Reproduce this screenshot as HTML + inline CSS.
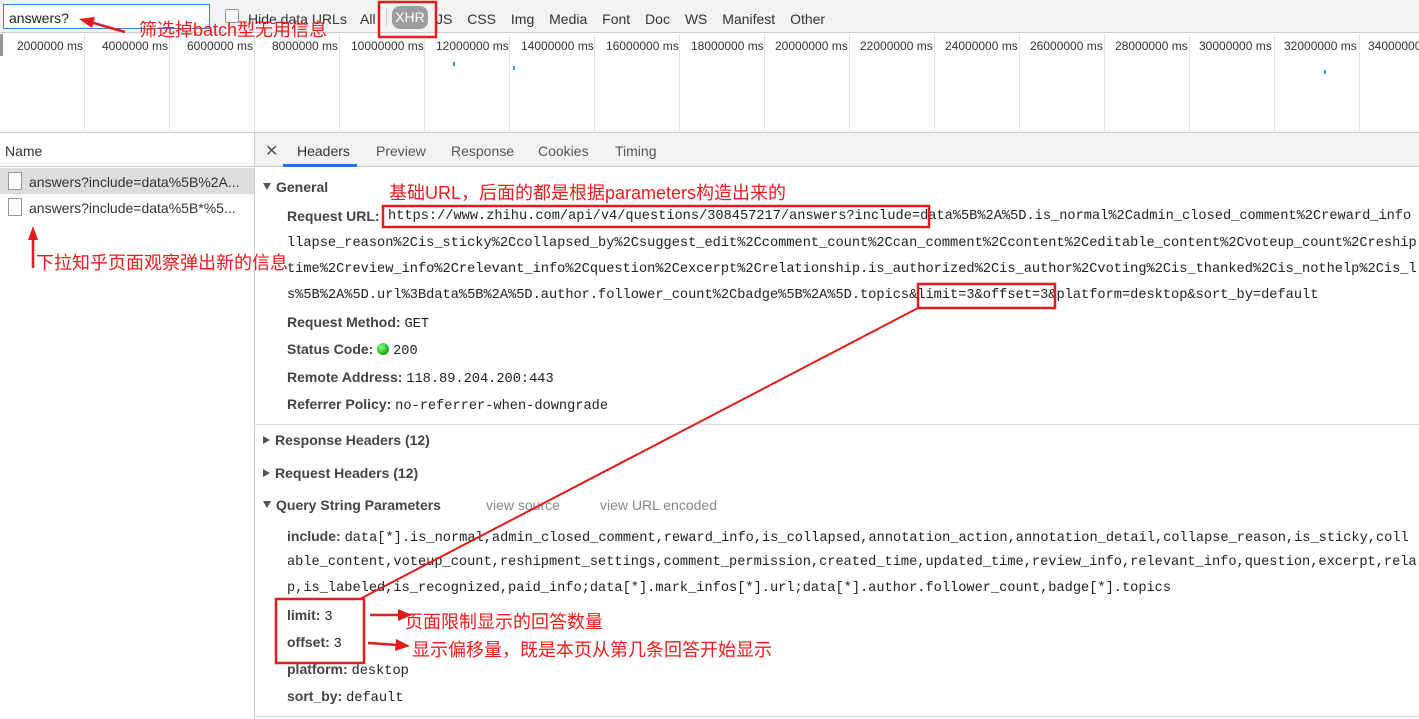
<!DOCTYPE html>
<html><head><meta charset="utf-8"><style>
*{margin:0;padding:0;box-sizing:border-box}
body{width:1419px;height:719px;overflow:hidden;background:#fff;font-family:"Liberation Sans","Noto Sans CJK SC",sans-serif;font-size:14px;color:#333;position:relative}
.a{position:absolute;white-space:nowrap}
.m{font-family:"Liberation Mono",monospace;font-size:13.65px;color:#222}
.b{font-weight:bold;color:#444;font-size:14px}
.red{color:#f21b1b;font-size:18px;font-family:"Liberation Sans","Noto Sans CJK SC",sans-serif}
.tri{display:inline-block;width:0;height:0;border-left:4px solid transparent;border-right:4px solid transparent;border-top:7px solid #555;margin-right:5px;vertical-align:2px}
.trr{display:inline-block;width:0;height:0;border-top:4px solid transparent;border-bottom:4px solid transparent;border-left:7px solid #555;margin-right:5px;vertical-align:1px}
</style></head><body>
<div class="a" style="left:0;top:0;width:1419px;height:33px;background:#f3f3f3;border-bottom:1px solid #ccc"></div>
<div class="a" style="left:3px;top:4px;width:207px;height:25px;background:#fff;border:1px solid #3b82d9"></div>
<div class="a" style="left:9px;top:10px;font-size:14px;color:#222">answers?</div>
<div class="a" style="left:225px;top:9px;width:14px;height:14px;border:1px solid #999;border-radius:2px;background:#fafafa"></div>
<div class="a" style="left:248px;top:11px;color:#333">Hide data URLs</div>
<div class="a" style="left:360px;top:11px;color:#333">All</div>
<div class="a" style="left:386px;top:8px;width:1px;height:18px;background:#ccc"></div>
<div class="a" style="left:392px;top:6px;width:36px;height:23px;background:#9e9e9e;border-radius:8px;color:#fff;text-align:center;line-height:23px">XHR</div>
<div class="a" style="left:436px;top:11px;color:#333;word-spacing:11px">JS CSS Img Media Font Doc WS Manifest Other</div>
<div class="a" style="left:0;top:33px;width:1419px;height:100px;border-bottom:1px solid #ccc"></div>
<div class="a" style="left:0;top:34px;width:3px;height:22px;background:#999"></div>
<div class="a" style="left:0;top:34px;width:1419px;height:99px;background:repeating-linear-gradient(90deg,transparent 0,transparent 84px,#e4e4e4 84px,#e4e4e4 85px)"></div>
<div class="a" style="left:0;top:39px;font-size:12px;color:#333">
<span class="a" style="left:17px">2000000 ms</span><span class="a" style="left:102px">4000000 ms</span><span class="a" style="left:187px">6000000 ms</span><span class="a" style="left:272px">8000000 ms</span><span class="a" style="left:351px">10000000 ms</span><span class="a" style="left:436px">12000000 ms</span><span class="a" style="left:521px">14000000 ms</span><span class="a" style="left:606px">16000000 ms</span><span class="a" style="left:691px">18000000 ms</span><span class="a" style="left:775px">20000000 ms</span><span class="a" style="left:860px">22000000 ms</span><span class="a" style="left:945px">24000000 ms</span><span class="a" style="left:1030px">26000000 ms</span><span class="a" style="left:1115px">28000000 ms</span><span class="a" style="left:1199px">30000000 ms</span><span class="a" style="left:1284px">32000000 ms</span><span class="a" style="left:1368px">34000000 ms</span></div>
<div class="a" style="left:453px;top:62px;width:2px;height:4px;background:#3aa"></div>
<div class="a" style="left:513px;top:66px;width:2px;height:4px;background:#3aa"></div>
<div class="a" style="left:1324px;top:70px;width:2px;height:4px;background:#3aa"></div>
<div class="a" style="left:254px;top:133px;width:1px;height:586px;background:#ccc"></div>
<div class="a" style="left:0;top:133px;width:254px;height:34px;border-bottom:1px solid #ccc"></div>
<div class="a" style="left:5px;top:143px;font-size:14px;color:#333">Name</div>
<div class="a" style="left:0;top:168px;width:254px;height:26px;background:#ddd"></div>
<div class="a" style="left:8px;top:172px;width:14px;height:18px;border:1px solid #999;background:#fff"></div>
<div class="a" style="left:29px;top:174px;color:#333">answers?include=data%5B%2A...</div>
<div class="a" style="left:8px;top:198px;width:14px;height:18px;border:1px solid #999;background:#fff"></div>
<div class="a" style="left:29px;top:200px;color:#333">answers?include=data%5B*%5...</div>
<div class="a" style="left:255px;top:133px;width:1164px;height:34px;background:#f3f3f3;border-bottom:1px solid #ccc"></div>
<div class="a" style="left:265px;top:141px;font-size:16px;color:#555">✕</div>
<div class="a" style="left:297px;top:143px;color:#333">Headers</div>
<div class="a" style="left:283px;top:164px;width:74px;height:3px;background:#1a73e8"></div>
<div class="a" style="left:376px;top:143px;color:#555">Preview</div>
<div class="a" style="left:451px;top:143px;color:#555">Response</div>
<div class="a" style="left:538px;top:143px;color:#555">Cookies</div>
<div class="a" style="left:615px;top:143px;color:#555">Timing</div>
<div class="a b" style="left:263px;top:179px"><span class="tri"></span>General</div>
<div class="a b" style="left:287px;top:208px">Request URL:</div>
<div class="a m" style="left:388px;top:209px">https://www.zhihu.com/api/v4/questions/308457217/answers?include=data%5B%2A%5D.is_normal%2Cadmin_closed_comment%2Creward_info</div>
<div class="a m" style="left:287px;top:236px">llapse_reason%2Cis_sticky%2Ccollapsed_by%2Csuggest_edit%2Ccomment_count%2Ccan_comment%2Ccontent%2Ceditable_content%2Cvoteup_count%2Creship</div>
<div class="a m" style="left:287px;top:262px">time%2Creview_info%2Crelevant_info%2Cquestion%2Cexcerpt%2Crelationship.is_authorized%2Cis_author%2Cvoting%2Cis_thanked%2Cis_nothelp%2Cis_l</div>
<div class="a m" style="left:287px;top:288px">s%5B%2A%5D.url%3Bdata%5B%2A%5D.author.follower_count%2Cbadge%5B%2A%5D.topics&amp;limit=3&amp;offset=3&amp;platform=desktop&amp;sort_by=default</div>
<div class="a b" style="left:287px;top:314px">Request Method: <span class="m" style="font-weight:normal">GET</span></div>
<div class="a b" style="left:287px;top:341px">Status Code: <span style="display:inline-block;width:12px;height:12px;border-radius:50%;background:radial-gradient(circle at 35% 35%,#8f8,#1a1 70%);vertical-align:-1px"></span> <span class="m" style="font-weight:normal">200</span></div>
<div class="a b" style="left:287px;top:369px">Remote Address: <span class="m" style="font-weight:normal">118.89.204.200:443</span></div>
<div class="a b" style="left:287px;top:396px">Referrer Policy: <span class="m" style="font-weight:normal">no-referrer-when-downgrade</span></div>
<div class="a" style="left:255px;top:424px;width:1164px;height:1px;background:#ddd"></div>
<div class="a b" style="left:263px;top:432px"><span class="trr"></span>Response Headers (12)</div>
<div class="a b" style="left:263px;top:465px"><span class="trr"></span>Request Headers (12)</div>
<div class="a b" style="left:263px;top:497px"><span class="tri"></span>Query String Parameters</div>
<div class="a" style="left:486px;top:497px;color:#888">view source</div>
<div class="a" style="left:600px;top:497px;color:#888">view URL encoded</div>
<div class="a b" style="left:287px;top:528px">include: <span class="m" style="font-weight:normal">data[*].is_normal,admin_closed_comment,reward_info,is_collapsed,annotation_action,annotation_detail,collapse_reason,is_sticky,coll</span></div>
<div class="a m" style="left:287px;top:555px">able_content,voteup_count,reshipment_settings,comment_permission,created_time,updated_time,review_info,relevant_info,question,excerpt,rela</div>
<div class="a m" style="left:287px;top:581px">p,is_labeled,is_recognized,paid_info;data[*].mark_infos[*].url;data[*].author.follower_count,badge[*].topics</div>
<div class="a b" style="left:287px;top:607px">limit: <span class="m" style="font-weight:normal">3</span></div>
<div class="a b" style="left:287px;top:634px">offset: <span class="m" style="font-weight:normal">3</span></div>
<div class="a b" style="left:287px;top:661px">platform: <span class="m" style="font-weight:normal">desktop</span></div>
<div class="a b" style="left:287px;top:688px">sort_by: <span class="m" style="font-weight:normal">default</span></div>
<div class="a" style="left:255px;top:716px;width:1164px;height:1px;background:#ddd"></div>
<div class="a red" style="left:139px;top:16px">筛选掉batch型无用信息</div>
<div class="a red" style="left:389px;top:179px">基础URL，后面的都是根据parameters构造出来的</div>
<div class="a red" style="left:36px;top:249px">下拉知乎页面观察弹出新的信息</div>
<div class="a red" style="left:405px;top:608px">页面限制显示的回答数量</div>
<div class="a red" style="left:412px;top:636px">显示偏移量，既是本页从第几条回答开始显示</div>
<svg class="a" style="left:0;top:0" width="1419" height="719">
<g fill="none" stroke="#e21b1b" stroke-width="2.5">
<rect x="379" y="2" width="57" height="35"/>
<rect x="383" y="206" width="546" height="21"/>
<rect x="918" y="284" width="137" height="24"/>
<rect x="276" y="599" width="88" height="64"/>
<line x1="918" y1="308" x2="360" y2="599" stroke-width="2"/>
<line x1="125" y1="32" x2="90" y2="22"/>
<line x1="33" y1="268" x2="33" y2="236"/>
<line x1="370" y1="615" x2="400" y2="615"/>
<line x1="368" y1="643" x2="398" y2="645"/>
</g>
<g fill="#e21b1b">
<polygon points="79,19 95,17 92,28"/>
<polygon points="33,226 28,240 38,240"/>
<polygon points="412,615 398,609 398,621"/>
<polygon points="410,646 396,639 395,651"/>
</g>
</svg>
</body></html>
